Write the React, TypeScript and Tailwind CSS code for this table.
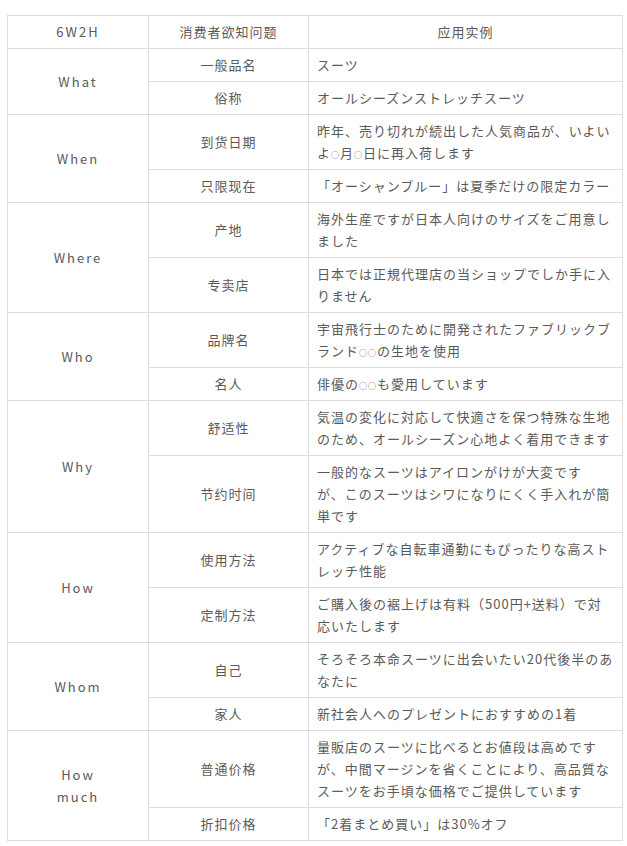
type Sub = { q: string; a: string[] };
type Group = { key: string[]; subs: Sub[] };

const groups: Group[] = [
  {
    key: ['What'],
    subs: [
      { q: '一般品名', a: ['スーツ'] },
      { q: '俗称', a: ['オールシーズンストレッチスーツ'] },
    ],
  },
  {
    key: ['When'],
    subs: [
      { q: '到货日期', a: ['昨年、売り切れが続出した人気商品が、いよい', 'よ○月○日に再入荷します'] },
      { q: '只限现在', a: ['「オーシャンブルー」は夏季だけの限定カラー'] },
    ],
  },
  {
    key: ['Where'],
    subs: [
      { q: '产地', a: ['海外生産ですが日本人向けのサイズをご用意し', 'ました'] },
      { q: '专卖店', a: ['日本では正規代理店の当ショップでしか手に入', 'りません'] },
    ],
  },
  {
    key: ['Who'],
    subs: [
      { q: '品牌名', a: ['宇宙飛行士のために開発されたファブリックブ', 'ランド○○の生地を使用'] },
      { q: '名人', a: ['俳優の○○も愛用しています'] },
    ],
  },
  {
    key: ['Why'],
    subs: [
      { q: '舒适性', a: ['気温の変化に対応して快適さを保つ特殊な生地', 'のため、オールシーズン心地よく着用できます'] },
      { q: '节约时间', a: ['一般的なスーツはアイロンがけが大変です', 'が、このスーツはシワになりにくく手入れが簡', '単です'] },
    ],
  },
  {
    key: ['How'],
    subs: [
      { q: '使用方法', a: ['アクティブな自転車通勤にもぴったりな高スト', 'レッチ性能'] },
      { q: '定制方法', a: ['ご購入後の裾上げは有料（500円+送料）で対', '応いたします'] },
    ],
  },
  {
    key: ['Whom'],
    subs: [
      { q: '自己', a: ['そろそろ本命スーツに出会いたい20代後半のあ', 'なたに'] },
      { q: '家人', a: ['新社会人へのプレゼントにおすすめの1着'] },
    ],
  },
  {
    key: ['How', 'much'],
    subs: [
      { q: '普通价格', a: ['量販店のスーツに比べるとお値段は高めです', 'が、中間マージンを省くことにより、高品質な', 'スーツをお手頃な価格でご提供しています'] },
      { q: '折扣价格', a: ['「2着まとめ買い」は30%オフ'] },
    ],
  },
];

const cell = 'border border-[#dcdcdc] py-[5px] leading-[22px] align-middle';

// the placeholder circle is drawn small in the source, like a latin glyph
function Line({ text }: { text: string }) {
  const parts = text.split('○');
  return (
    <span className="block whitespace-nowrap">
      {parts.map((p, i) => (
        <span key={i}>
          {p}
          {i < parts.length - 1 && <span className="text-[8px] leading-[0] tracking-[1px]">○</span>}
        </span>
      ))}
    </span>
  );
}

function Lines({ lines }: { lines: string[] }) {
  return (
    <>
      {lines.map((l, i) => (
        <Line key={i} text={l} />
      ))}
    </>
  );
}

export default function App() {
  return (
    <div
      className="min-h-[846px] bg-white pt-[15px] pl-[7px] text-[13px] text-[#5a5a5a]"
      style={{ fontFamily: '"Noto Sans CJK SC", "Noto Sans CJK JP", sans-serif' }}
    >
      <table className="w-[615px] table-fixed border-collapse">
        <colgroup>
          <col className="w-[141px]" />
          <col className="w-[160px]" />
          <col className="w-[314px]" />
        </colgroup>
        <thead>
          <tr>
            <th className={`${cell} text-center font-normal tracking-[2px]`}>6W2H</th>
            <th className={`${cell} text-center font-normal tracking-[1px]`}>消费者欲知问题</th>
            <th className={`${cell} text-center font-normal tracking-[1px]`}>应用实例</th>
          </tr>
        </thead>
        <tbody>
          {groups.map((g) =>
            g.subs.map((s, i) => (
              <tr key={g.key.join() + s.q}>
                {i === 0 && (
                  <td rowSpan={g.subs.length} className={`${cell} text-center tracking-[2px]`}>
                    <Lines lines={g.key} />
                  </td>
                )}
                <td className={`${cell} text-center tracking-[1px]`}>{s.q}</td>
                <td className={`${cell} px-2 tracking-[1px]`}>
                  <Lines lines={s.a} />
                </td>
              </tr>
            ))
          )}
        </tbody>
      </table>
    </div>
  );
}
